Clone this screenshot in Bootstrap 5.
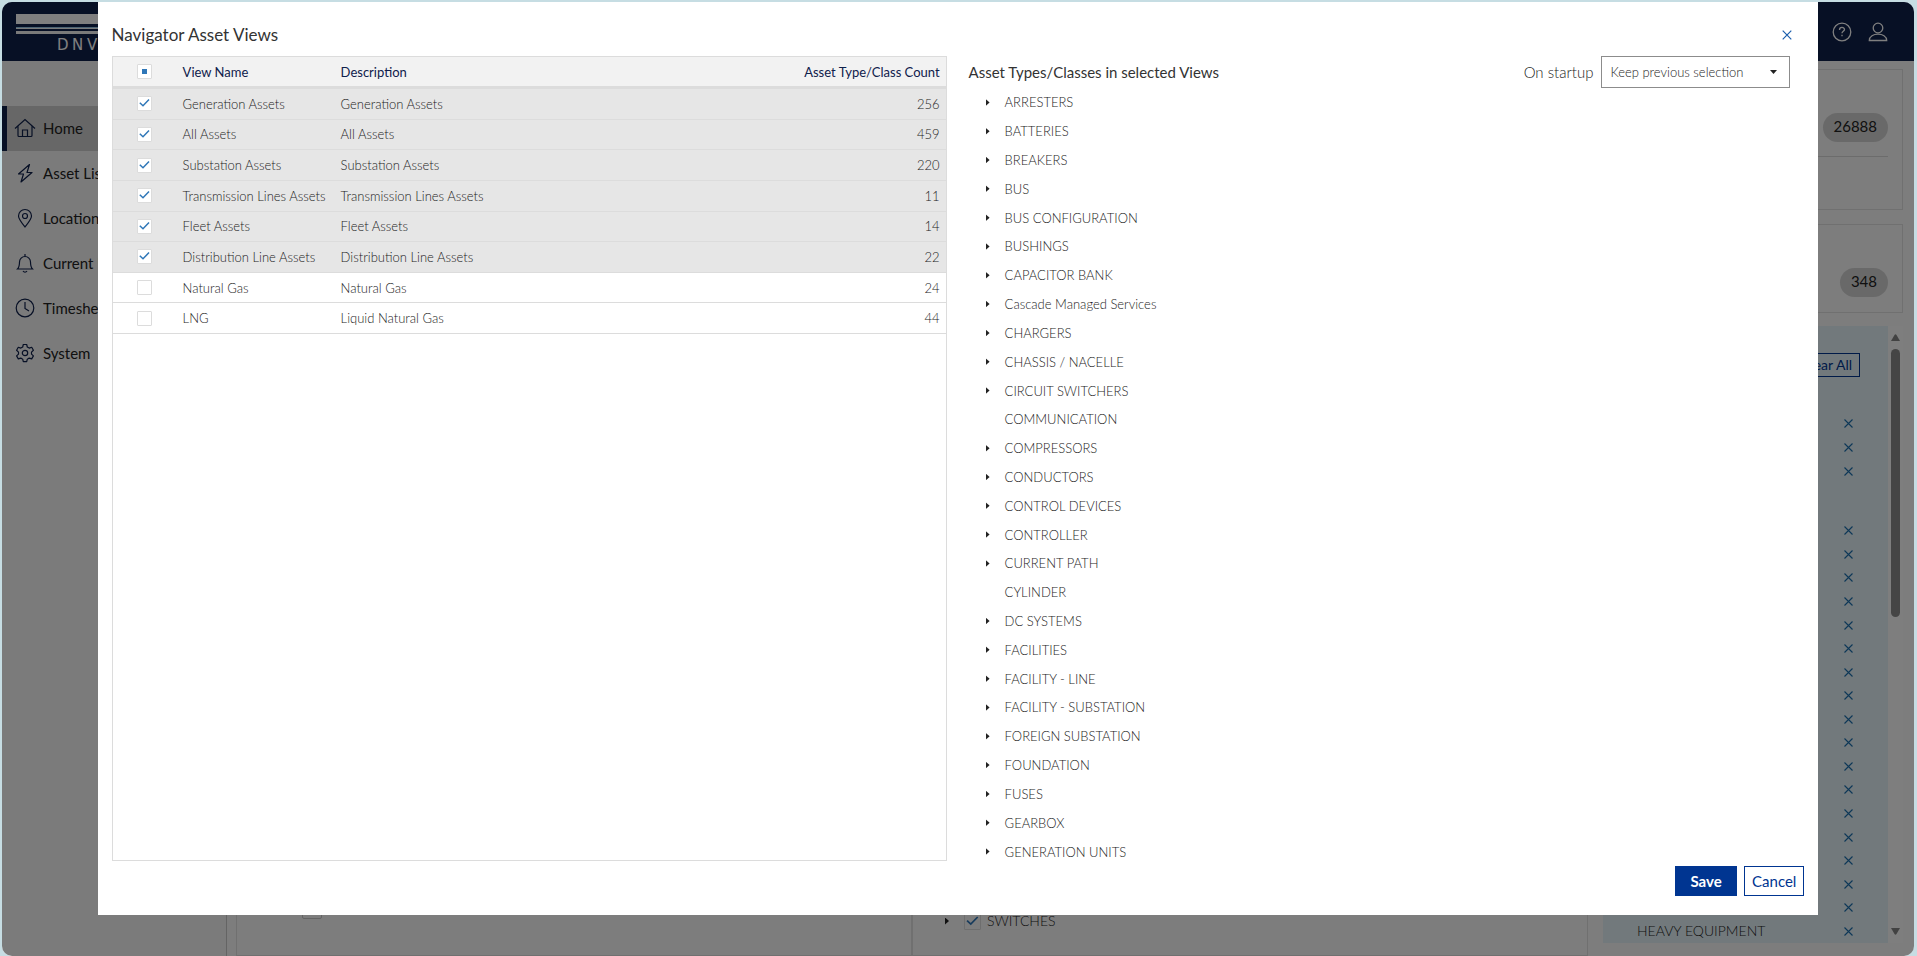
<!DOCTYPE html>
<html lang="en">
<head>
<meta charset="utf-8">
<title>Navigator Asset Views</title>
<meta name="viewport" content="width=device-width, initial-scale=1">
<link href="https://cdn.jsdelivr.net/npm/bootstrap@5.3.0/dist/css/bootstrap.min.css" rel="stylesheet">
<style>
  :root { --navy: #0f204b; --royal: #003591; --sky: #2f77b8; --rule: #dcdcdc; --ink: #1c1c1c; }
  body { background: #c6dde3; font-family: Lato, "Open Sans", sans-serif; font-weight: 300; font-size: 13px; line-height: 20px; color: var(--ink); }
  .app-frame { height: 100vh; padding: 2px 3px 0 2px; }
  .app-shell { border-radius: 10px; background: #fafafa; }
  .topbar { height: 59px; background: var(--navy); flex: none; padding: 0 26px 0 14px; }
  .side { width: 225px; flex: none; background: #f7f7f7; border-right: 1px solid #c8c8c8; padding-top: 45px; }
  .side a { height: 45px; padding: 0 0 2px 7px; gap: 7px; color: #222; text-decoration: none; border-left: 5px solid transparent; font-size: 15px; font-weight: 400; }
  .side a.current { background: #cecece; border-left-color: var(--navy); }
  .side svg { color: var(--navy); }
  .center-pane { margin-left: 9px; margin-right: 15px; border: 1px solid #e0e0e0; }
  .center-pane > div { flex: 1 1 0; }
  .pane-right { border-left: 2px solid #e0e0e0; }
  .right-pane { width: 300px; flex: none; margin-right: 11px; padding: 8px 0 13px; }
  .stat-box { border: 1px solid #e0e0e0; padding: 0 14px; }
  .stat-a { height: 141px; padding-top: 43px; margin-bottom: 14px; }
  .stat-a > div { padding-bottom: 14px; border-bottom: 1px solid #d8d8d8; }
  .stat-b { height: 89px; padding-top: 43px; margin-bottom: 13px; }
  .pill { background: #d3d3d3; color: #222; border-radius: 15px; height: 29px; padding: 3px 11px; font-size: 15px; font-weight: 400; }
  .blue-list { background: #e5f3f8; padding: 27px 0 0 34px; font-size: 14px; }
  .btn-line { border: 1px solid var(--royal); color: var(--royal); background: transparent; border-radius: 0; font-size: 14px; line-height: 20px; }
  .btn-clear { height: 24px; padding: 0 7px; }
  .picked { padding-right: 35px; }
  .picked > div { flex: 1 1 0; min-height: 0; }
  .picked-a { height: 71px; margin: 35px 0 36px; flex: none; }
  .bare { border: 0; background: none; padding: 0; line-height: 0; color: #1a6fae; }
  .scroll-track { width: 15px; flex: none; background: #fcfcfc; padding: 8px 0; color: #858585; }
  .thumb { width: 9px; height: 268px; border-radius: 5px; background: #8b8b8b; margin-top: 8px; }
  .shade { background: rgba(0,0,0,.5); padding: 0 5% 41px; }
  .sheet { background: #fff; padding: 0 14px 19px; }
  .sheet-head { height: 54px; padding: 11px 12px 0 0; }
  .sheet-head h1 { font-size: 17px; line-height: 20px; font-weight: 400; color: #333; margin: 0; }
  .views { width: 835px; flex: none; border: 1px solid var(--rule); margin-bottom: 5px; }
  .views table { width: 100%; height: 277px; border-collapse: separate; border-spacing: 0; table-layout: fixed; }
  .views th { height: 32px; background: #f2f2f2; border-bottom: 3px solid var(--rule); color: var(--navy); font-weight: 400; padding: 0 6px; }
  .views td { border-bottom: 1px solid var(--rule); padding: 0 6px; white-space: nowrap; }
  .views tr.picked-row td { background: #e6e6e6; }
  .c-check { width: 64px; } .c-name { width: 158px; } .c-count { width: 160px; }
  .tick { appearance: none; display: block; width: 15px; height: 15px; margin: 0 auto; background: #fff center / 13px no-repeat; border: 1px solid var(--rule); border-radius: 1px; }
  .tick:checked { background-image: url("data:image/svg+xml,%3Csvg xmlns='http://www.w3.org/2000/svg' viewBox='0 0 13 13'%3E%3Cpath d='M1.8 5.8 5 8.8 11 2.6' fill='none' stroke='%232f77b8' stroke-width='1.5'/%3E%3C/svg%3E"); }
  .tick.mixed { background-image: linear-gradient(var(--sky), var(--sky)); background-size: 5px 5px; }
  .types { margin-left: 22px; }
  .types-head { height: 32px; padding-right: 14px; }
  .types-head label { font-size: 15px; }
  .types h2 { font-size: 15px; line-height: 20px; font-weight: 400; color: #333; margin: 0; }
  .startup { width: 189px; height: 32px; border: 1px solid #8c8c8c; border-radius: 0; padding: 0 8px; font: inherit; color: var(--ink); appearance: none; background: #fff url("data:image/svg+xml,%3Csvg xmlns='http://www.w3.org/2000/svg' viewBox='0 0 7 4'%3E%3Cpath d='M0 0h7L3.500 4z' fill='%23222'/%3E%3C/svg%3E") right 12px center / 7px 4px no-repeat; }
  .tree { padding-left: 17px; }
  .tree li { flex: 1 1 0; gap: 15px; }
  .twist { width: 4px; height: 7px; background: #222; clip-path: polygon(0 0, 100% 50%, 0 100%); flex: none; border: 0; padding: 0; }
  .switch-row { gap: 15px; margin-left: 32px; font-size: 14px; }
  .switch-row label { gap: 6px; }
  .switch-row .tick { width: 17px; height: 17px; background-size: 15px; background-color: transparent; }
  .btn-foot { height: 30px; padding: 0 7px; border-radius: 0; font-size: 15px; line-height: 20px; font-weight: 400; border: 1px solid var(--royal); }
  .btn-solid { background: var(--royal); color: #fff; font-weight: 700; width: 62px; }
  .under-check { width: 20px; height: 20px; border: 1px solid #c8c8c8; border-radius: 2px; margin: 0 0 36px 65px; }
  .gap-foot { gap: 7px; }
</style>
</head>
<body>
<div class="app-frame">
 <div class="app-shell h-100 d-flex flex-column position-relative overflow-hidden">
  <header class="topbar d-flex align-items-center justify-content-between">
    <svg width="120" height="48" viewBox="0 0 120 48" role="img" aria-label="DNV">
      <path d="M0 6h120v10H0z" fill="#fff"/><path d="M0 19h120v1H0z" fill="#99c9e8"/><path d="M0 20h120v1H0zM0 23h120v3H0z" fill="#f4f4f4"/>
      <text x="41 56 71" y="42" font-family="DejaVu Sans" font-size="15" font-weight="400" fill="#fff">DNV</text>
    </svg>
    <div class="d-flex gap-3 text-white">
      <svg width="20" height="20" viewBox="0 0 20 20" fill="none" stroke="currentColor" stroke-width="1.300"><circle cx="10" cy="10" r="8.800"/><path d="M7.500 8c0-3.500 5-3.200 5-.4 0 1.700-2.500 1.800-2.500 3.600M10 12.700v1.600"/></svg>
      <svg width="20" height="20" viewBox="0 0 20 20" fill="none" stroke="currentColor" stroke-width="1.300"><circle cx="10" cy="6" r="4.800"/><path d="M1.300 18.500c0-8.500 17.400-8.500 17.400 0z"/></svg>
    </div>
  </header>
  <div class="d-flex flex-fill overflow-hidden">
   <nav class="side d-flex flex-column">
    <a href="#" class="current d-flex align-items-center"><svg width="22" height="22" viewBox="0 0 22 22" fill="none" stroke="currentColor" stroke-width="1.200"><path d="M1 11.500 11 2.500 21 11.500M4 9v9.500q0 1 1 1h12q1 0 1-1V9M8.500 19v-6h5v6"/></svg>Home</a>
    <a href="#" class="d-flex align-items-center"><svg width="22" height="22" viewBox="0 0 22 22" fill="none" stroke="currentColor" stroke-width="1.200" stroke-linejoin="round"><path d="M15.500 2.500 4.500 12h5L7 20l11-9.500h-5z"/></svg>Asset List</a>
    <a href="#" class="d-flex align-items-center"><svg width="22" height="22" viewBox="0 0 22 22" fill="none" stroke="currentColor" stroke-width="1.200"><path d="M11 20C7 15 4.500 12 4.500 9a6.500 6.500 0 0 1 13 0c0 3-2.500 6-6.500 11z"/><circle cx="11" cy="9" r="2.500"/></svg>Locations</a>
    <a href="#" class="d-flex align-items-center"><svg width="22" height="22" viewBox="0 0 22 22" fill="none" stroke="currentColor" stroke-width="1.200"><path d="M3.500 17c2-2 2-4 2-7a5.500 5.500 0 0 1 11 0c0 3 0 5 2 7zM9 19c1 1.500 3 1.500 4 0M11 4.500V2"/></svg>Current User</a>
    <a href="#" class="d-flex align-items-center"><svg width="22" height="22" viewBox="0 0 22 22" fill="none" stroke="currentColor" stroke-width="1.200"><circle cx="11" cy="11" r="8.800"/><path d="M11 5v6.500l4 2.500"/></svg>Timesheets</a>
    <a href="#" class="d-flex align-items-center"><svg width="22" height="22" viewBox="0 0 22 22" fill="none" stroke="currentColor" stroke-width="1.200" stroke-linejoin="round"><circle cx="11" cy="11" r="2.700"/><path d="M9.300 2.500h3.400l.6 2.500 1.900 1.100 2.500-.8 1.700 3-1.900 1.800v2l1.900 1.800-1.700 3-2.500-.8-1.900 1.100-.6 2.500H9.300l-.6-2.500-1.900-1.100-2.500.8-1.700-3 1.900-1.800v-2L2.600 8.300l1.700-3 2.500.8L8.700 5z"/></svg>System</a>
   </nav>
   <section class="center-pane flex-fill d-flex">
    <div class="d-flex flex-column justify-content-end"><div class="under-check"></div></div>
    <div class="pane-right d-flex align-items-end pb-4">
      <div class="switch-row d-flex align-items-center">
       <button class="twist" type="button" aria-label="Expand"></button>
       <label class="d-flex align-items-center"><input class="tick" type="checkbox" checked>SWITCHES</label>
      </div>
    </div>
   </section>
   <aside class="right-pane d-flex flex-column">
    <div class="stat-box stat-a"><div class="d-flex justify-content-end"><span class="pill">26888</span></div></div>
    <div class="stat-box stat-b"><div class="d-flex justify-content-end"><span class="pill">348</span></div></div>
    <div class="d-flex flex-fill overflow-hidden">
     <div class="blue-list flex-fill d-flex flex-column">
      <div class="d-flex justify-content-end me-4 pe-1"><button class="btn btn-line btn-clear" type="button">Clear All</button></div>
      <div class="picked picked-a d-flex flex-column"></div>
      <div class="picked picked-b d-flex flex-column flex-fill"></div>
     </div>
     <div class="scroll-track d-flex flex-column align-items-center">
      <svg width="9" height="7" viewBox="0 0 9 7"><path d="M0 7 3.500 1q1-1.500 2 0L9 7z" fill="currentColor"/></svg>
      <div class="thumb"></div>
      <svg class="mt-auto" width="9" height="7" viewBox="0 0 9 7"><path d="M0 0 3.500 6q1 1.500 2 0L9 0z" fill="currentColor"/></svg>
     </div>
    </div>
   </aside>
  </div>

  <div class="shade position-absolute top-0 start-0 w-100 h-100 d-flex">
   <div class="sheet flex-fill d-flex flex-column" role="dialog" aria-modal="true" aria-labelledby="dlg-title">
    <div class="sheet-head d-flex align-items-center justify-content-between">
      <h1 id="dlg-title">Navigator Asset Views</h1>
      <button class="bare" type="button" aria-label="Close"><svg width="10" height="10" viewBox="0 0 10 10" fill="none" stroke="#1c5fae" stroke-width="1.200"><path d="m.7.7 8.600 8.600M9.300.7.7 9.300"/></svg></button>
    </div>
    <div class="d-flex flex-fill">
     <div class="views">
      <table>
       <colgroup><col class="c-check"><col class="c-name"><col><col class="c-count"></colgroup>
       <thead><tr><th><input class="tick mixed" type="checkbox" aria-label="Select all"></th><th>View Name</th><th>Description</th><th class="text-end">Asset Type/Class Count</th></tr></thead>
       <tbody id="views"></tbody>
      </table>
     </div>
     <div class="types flex-fill d-flex flex-column">
      <div class="types-head d-flex align-items-center">
       <h2 class="me-auto">Asset Types/Classes in selected Views</h2>
       <label for="startup" class="me-2">On startup</label>
       <select id="startup" class="startup"><option>Keep previous selection</option></select>
      </div>
      <ul class="tree list-unstyled m-0 flex-fill d-flex flex-column" id="tree"></ul>
     </div>
    </div>
    <div class="d-flex justify-content-end gap-foot">
     <button class="btn btn-foot btn-solid" type="button">Save</button>
     <button class="btn btn-foot btn-line" type="button">Cancel</button>
    </div>
   </div>
  </div>
 </div>
</div>
<script>
  const views = [["Generation Assets","Generation Assets",256,1],["All Assets","All Assets",459,1],["Substation Assets","Substation Assets",220,1],["Transmission Lines Assets","Transmission Lines Assets",11,1],["Fleet Assets","Fleet Assets",14,1],["Distribution Line Assets","Distribution Line Assets",22,1],["Natural Gas","Natural Gas",24,0],["LNG","Liquid Natural Gas",44,0]];
  document.getElementById("views").innerHTML = views.map(([n, d, c, on]) =>
    `<tr class="${on ? "picked-row" : ""}"><td><input class="tick" type="checkbox" aria-label="${n}" ${on ? "checked" : ""}></td><td>${n}</td><td>${d}</td><td class="text-end">${c}</td></tr>`).join("");
  const leaves = ["COMMUNICATION", "CYLINDER"];
  const types = ["ARRESTERS","BATTERIES","BREAKERS","BUS","BUS CONFIGURATION","BUSHINGS","CAPACITOR BANK","Cascade Managed Services","CHARGERS","CHASSIS / NACELLE","CIRCUIT SWITCHERS","COMMUNICATION","COMPRESSORS","CONDUCTORS","CONTROL DEVICES","CONTROLLER","CURRENT PATH","CYLINDER","DC SYSTEMS","FACILITIES","FACILITY - LINE","FACILITY - SUBSTATION","FOREIGN SUBSTATION","FOUNDATION","FUSES","GEARBOX","GENERATION UNITS"];
  document.getElementById("tree").innerHTML = types.map(t =>
    `<li class="d-flex align-items-center"><button type="button" class="twist ${leaves.includes(t) ? "invisible" : ""}" aria-label="Expand ${t}"></button>${t}</li>`).join("");
  const row = name => `<div class="d-flex align-items-center justify-content-between"><span>${name}</span><button class="bare" type="button" aria-label="Remove"><svg width="9" height="9" viewBox="0 0 9 9" fill="none" stroke="currentColor" stroke-width="1.100"><path d="m.5.5 8 8M8.500.5l-8 8"/></svg></button></div>`;
  document.querySelector(".picked-a").innerHTML = row("").repeat(3);
  document.querySelector(".picked-b").innerHTML = row("").repeat(17) + row("HEAVY EQUIPMENT");
</script>
<script src="https://cdn.jsdelivr.net/npm/bootstrap@5.3.0/dist/js/bootstrap.bundle.min.js"></script>
</body>
</html>
